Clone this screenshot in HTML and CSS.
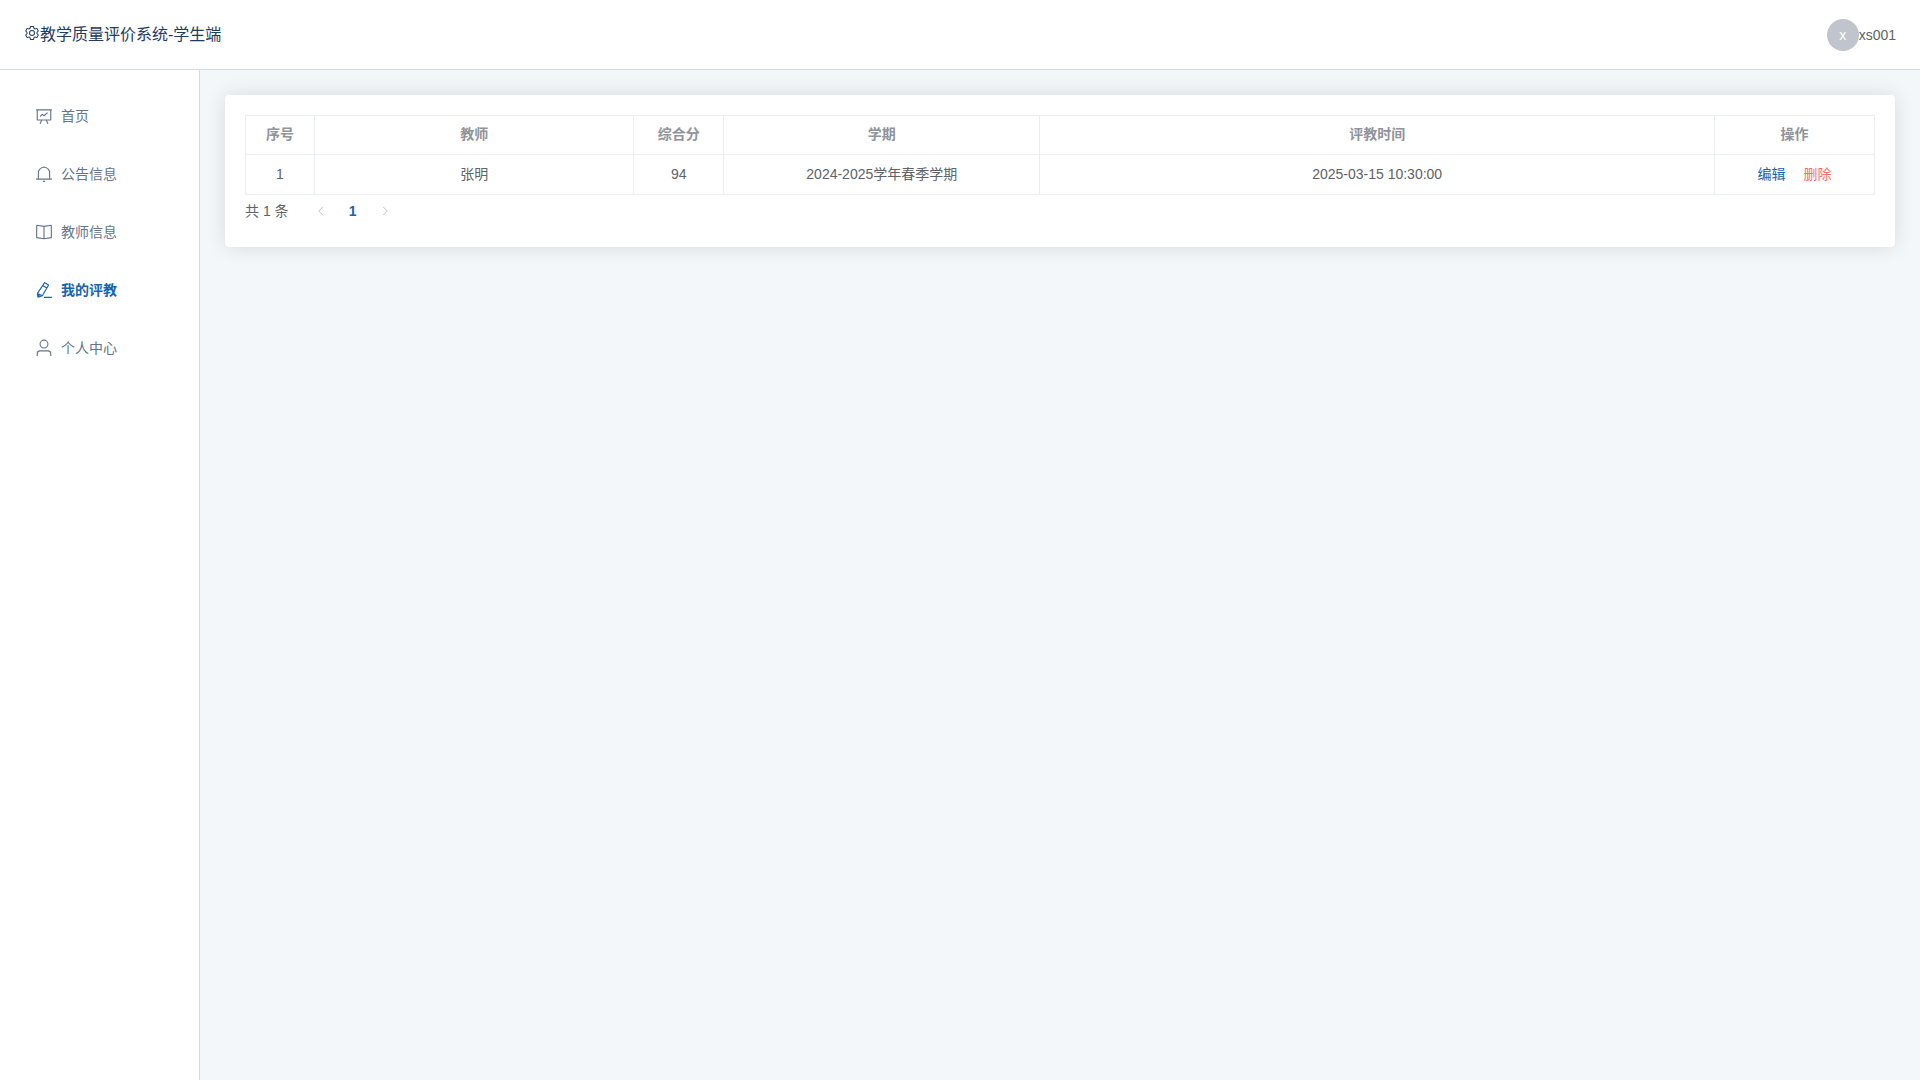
FILE: index.html
```html
<!DOCTYPE html>
<html lang="zh-CN">
<head>
    <meta charset="UTF-8">
    <title>教学质量评价系统</title>
    <link rel="stylesheet" href="styles.css">
</head>
<body>
<header class="header">
  <div class="brand">
    <svg class="brand-icon" viewBox="0 0 1024 1024"><path d="M600.704 64a32 32 0 0 1 30.464 22.208l35.2 109.376c14.784 7.232 28.928 15.36 42.432 24.512l112.384-24.192a32 32 0 0 1 34.432 15.36L944.32 364.8a32 32 0 0 1-4.032 37.504l-77.12 85.12a357 357 0 0 1 0 49.024l77.12 85.248a32 32 0 0 1 4.032 37.504l-88.704 153.6a32 32 0 0 1-34.432 15.296L708.8 803.904c-13.44 9.088-27.648 17.28-42.368 24.512l-35.264 109.376A32 32 0 0 1 600.704 960H423.296a32 32 0 0 1-30.464-22.208L357.696 828.48a352 352 0 0 1-42.56-24.64l-112.32 24.256a32 32 0 0 1-34.432-15.36L79.68 659.2a32 32 0 0 1 4.032-37.504l77.12-85.248a357 357 0 0 1 0-48.896l-77.12-85.248A32 32 0 0 1 79.68 364.8l88.704-153.6a32 32 0 0 1 34.432-15.296l112.32 24.256c13.568-9.152 27.776-17.408 42.56-24.64l35.2-109.312A32 32 0 0 1 423.232 64zm-23.424 64H446.72l-36.352 113.088-24.512 11.968a294 294 0 0 0-34.816 20.096l-22.656 15.36-116.224-25.088-65.28 113.152 79.68 88.192-1.92 27.136a293 293 0 0 0 0 40.192l1.92 27.136-79.808 88.192 65.344 113.152 116.224-25.024 22.656 15.296a294 294 0 0 0 34.816 20.096l24.512 11.968L446.72 896h130.688l36.48-113.152 24.448-11.904a288 288 0 0 0 34.752-20.096l22.592-15.296 116.288 25.024 65.28-113.152-79.744-88.192 1.92-27.136a293 293 0 0 0 0-40.256l-1.92-27.136 79.808-88.128-65.344-113.152-116.288 24.96-22.592-15.232a288 288 0 0 0-34.752-20.096l-24.448-11.904L577.344 128zM512 320a192 192 0 1 1 0 384 192 192 0 0 1 0-384m0 64a128 128 0 1 0 0 256 128 128 0 0 0 0-256"/></svg>
    <span>教学质量评价系统-学生端</span>
  </div>
  <div class="user">
    <span class="avatar">x</span>
    <span>xs001</span>
  </div>
</header>
<div class="container">
  <nav class="sidebar">
    <a class="menu-item" href="#">
      <svg class="menu-icon" viewBox="0 0 1024 1024"><path d="M64 160h896M128 160v576h768V160M288 544l128-128 96 80 208-176M384 736 288 960M640 736l96 224"/></svg>
      首页
    </a>
    <a class="menu-item" href="#">
      <svg class="menu-icon" viewBox="0 0 1024 1024"><path d="M64 800h896M192 800V448a320 320 0 0 1 640 0v352M512 64v64M448 928h128"/></svg>
      公告信息
    </a>
    <a class="menu-item" href="#">
      <svg class="menu-icon" viewBox="0 0 1024 1024"><path d="M512 192v704M512 192 96 128v704l416 64 416-64V128z"/></svg>
      教师信息
    </a>
    <a class="menu-item active" href="#">
      <svg class="menu-icon" viewBox="0 0 1024 1024"><path d="M512 928h448M550 96l222 128-352 610-252 82-30-210zM454 270l220 128M138 706l282 128M160 780l100 70"/></svg>
      我的评教
    </a>
    <a class="menu-item" href="#">
      <svg class="menu-icon" viewBox="0 0 1024 1024"><circle cx="512" cy="288" r="224"/><path d="M128 960V832a160 160 0 0 1 160-160h448a160 160 0 0 1 160 160v128"/></svg>
      个人中心
    </a>
  </nav>
  <main class="main">
    <div class="card">
      <table class="table">
        <colgroup>
          <col class="col-index">
          <col class="col-teacher">
          <col class="col-score">
          <col class="col-term">
          <col>
          <col class="col-action">
        </colgroup>
        <thead>
          <tr>
            <th>序号</th>
            <th>教师</th>
            <th>综合分</th>
            <th>学期</th>
            <th>评教时间</th>
            <th>操作</th>
          </tr>
        </thead>
        <tbody>
          <tr>
            <td>1</td>
            <td>张明</td>
            <td>94</td>
            <td>2024-2025学年春季学期</td>
            <td>2025-03-15 10:30:00</td>
            <td>
              <div class="actions">
                <button class="edit">编辑</button>
                <button class="delete">删除</button>
              </div>
            </td>
          </tr>
        </tbody>
      </table>
      <div class="pagination">
        <span class="total">共 1 条</span>
        <button class="page" disabled aria-label="上一页">
          <svg class="arrow" viewBox="0 0 1024 1024"><path d="M672 160 320 512l352 352"/></svg>
        </button>
        <button class="page current">1</button>
        <button class="page" disabled aria-label="下一页">
          <svg class="arrow" viewBox="0 0 1024 1024"><path d="m352 160 352 352-352 352"/></svg>
        </button>
      </div>
    </div>
  </main>
</div>
</body>
</html>
```
FILE: styles.css
```css
* {
  box-sizing: border-box;
}

body {
  margin: 0;
  min-height: 100vh;
  display: flex;
  flex-direction: column;
  font-family: "Liberation Sans", "Noto Sans CJK SC", sans-serif;
  font-size: 14px;
  line-height: 22px;
  color: #606266;
  background-color: #f3f7fa;
}

button {
  border: none;
  padding: 0;
  background: none;
  font: inherit;
  cursor: pointer;
}

/* header */
.header {
  display: flex;
  align-items: center;
  justify-content: space-between;
  height: 70px;
  padding: 0 24px;
  background-color: #fff;
  border-bottom: 1px solid #d0dce8;
}

.brand {
  display: flex;
  align-items: center;
  font-size: 16px;
  line-height: 24px;
  color: #1e3a5f;
}

.brand-icon {
  width: 16px;
  height: 16px;
  margin-bottom: 4px;
  fill: currentColor;
}

.user {
  display: flex;
  align-items: center;
}

.avatar {
  width: 32px;
  height: 32px;
  border-radius: 50%;
  background-color: #c0c4cc;
  color: #fff;
  text-align: center;
  line-height: 32px;
}

/* sidebar */
.container {
  flex: 1;
  display: flex;
}

.sidebar {
  width: 200px;
  padding-top: 17px;
  background-color: #fff;
  border-right: 1px solid #d0dce8;
}

.menu-item {
  display: flex;
  align-items: center;
  height: 58px;
  padding-left: 35px;
  gap: 8px;
  color: #64748b;
  text-decoration: none;
}

.menu-item.active {
  color: #1565ac;
  font-weight: bold;
}

.menu-icon {
  width: 18px;
  height: 18px;
  fill: none;
  stroke: currentColor;
  stroke-width: 64;
  stroke-linejoin: round;
}

/* content */
.main {
  flex: 1;
  padding: 25px;
}

.card {
  padding: 20px;
  background-color: #fff;
  border-radius: 4px;
  box-shadow: 0 0 20px rgba(0, 0, 0, 0.12);
}

.table {
  width: 100%;
  table-layout: fixed;
  border-spacing: 0;
  border-top: 1px solid #ebeef5;
  border-left: 1px solid #ebeef5;
}

.table th,
.table td {
  height: 40px;
  padding: 0 0 2px;
  text-align: center;
  border-right: 1px solid #ebeef5;
  border-bottom: 1px solid #ebeef5;
}

.table th {
  height: 39px;
  color: #909399;
}

.col-index {
  width: 69px;
}

.col-teacher {
  width: 19.6%;
}

.col-score {
  width: 90px;
}

.col-term {
  width: 19.4%;
}

.col-action {
  width: 160px;
}

.actions {
  display: flex;
  justify-content: center;
  gap: 18px;
}

.edit {
  color: #1565ac;
}

.delete {
  color: #f56c6c;
}

.pagination {
  display: flex;
  align-items: center;
}

.total {
  margin-right: 16px;
}

.page {
  width: 32px;
  height: 32px;
  display: flex;
  align-items: center;
  justify-content: center;
}

.page.current {
  color: #1565ac;
  font-weight: bold;
}

.arrow {
  width: 12px;
  height: 12px;
  fill: none;
  stroke: #a8abb2;
  stroke-width: 64;
}
```
